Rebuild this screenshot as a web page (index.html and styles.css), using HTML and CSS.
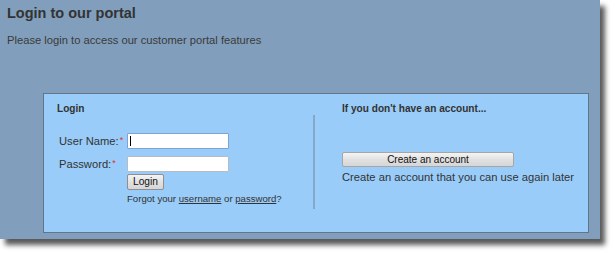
FILE: index.html
```html
<!DOCTYPE html>
<html>
<head>
<meta charset="utf-8">
<link rel="stylesheet" href="styles.css">
</head>
<body>
<div class="panel">
  <h1 class="title">Login to our portal</h1>
  <p class="subtitle">Please login to access our customer portal features</p>
  <div class="box">
    <div class="col-left">
      <div class="heading">Login</div>
      <div class="form">
        <label class="label">User Name:<span class="req">*</span></label>
        <span class="field-wrap focused"><input class="field" type="text"></span>
        <label class="label">Password:<span class="req">*</span></label>
        <span class="field-wrap"><input class="field" type="password"></span>
        <span></span>
        <div class="actions">
          <button class="btn btn-login">Login</button>
          <div class="forgot">Forgot your <a href="#">username</a> or <a href="#">password</a>?</div>
        </div>
      </div>
    </div>
    <div class="divider"></div>
    <div class="col-right">
      <div class="heading">If you don't have an account...</div>
      <button class="btn btn-create">Create an account</button>
      <div class="desc">Create an account that you can use again later</div>
    </div>
  </div>
</div>
</body>
</html>
```
FILE: styles.css
```css
html, body {
  margin: 0;
  padding: 0;
  background: #ffffff;
}
body {
  font-family: "Liberation Sans", Arial, sans-serif;
  color: #333333;
  min-height: 254px;
}
.panel {
  width: 600px;
  height: 239px;
  box-sizing: border-box;
  background: #819fbc;
  padding: 5px 7px;
  box-shadow: 5px 6px 5px rgba(0, 0, 0, 0.65);
}
.title {
  margin: 0;
  font-size: 14.5px;
  line-height: 17px;
  font-weight: bold;
  color: #333333;
}
.subtitle {
  margin: 12px 0 0 0;
  font-size: 11.2px;
  line-height: 13px;
  color: #3a3a3a;
}
.box {
  margin: 46px 0 0 36px;
  width: 546px;
  height: 140px;
  box-sizing: border-box;
  border: 1px solid #62768a;
  background: #99ccf9;
  display: flex;
}
.heading {
  font-size: 10.1px;
  line-height: 12px;
  font-weight: bold;
  color: #333333;
}
.col-left {
  width: 269px;
  box-sizing: border-box;
  padding: 9px 0 0 13px;
}
.form {
  margin: 18px 0 0 2px;
  display: grid;
  grid-template-columns: 68px auto;
  row-gap: 7px;
}
.label {
  font-size: 11.2px;
  line-height: 16px;
  height: 16px;
  color: #333333;
  white-space: nowrap;
}
.req {
  color: #e0302a;
  font-size: 9px;
  vertical-align: top;
  position: relative;
  top: -1px;
  margin-left: 1px;
}
.field-wrap {
  position: relative;
  display: block;
  width: 102px;
  height: 16px;
}
.field {
  display: block;
  box-sizing: border-box;
  width: 102px;
  height: 16px;
  margin: 0;
  padding: 0;
  border: 1px solid #b5bcc6;
  border-radius: 1px;
  background: #ffffff;
  outline: none;
}
.focused .field {
  border-color: #7fa3d6;
}
.focused::after {
  content: "";
  position: absolute;
  left: 3px;
  top: 3px;
  width: 1px;
  height: 10px;
  background: #000000;
}
.actions {
  margin-top: -5px;
  display: flex;
  flex-direction: column;
  align-items: flex-start;
}
.btn {
  font-family: "Liberation Sans", Arial, sans-serif;
  color: #111111;
  box-sizing: border-box;
  margin: 0;
  padding: 0;
  background: linear-gradient(#f4f4f4, #e1e1e1 50%, #d6d6d6);
  border: 1px solid #8f8f8f;
  border-radius: 2px;
  cursor: default;
}
.btn-login {
  width: 37px;
  height: 16px;
  font-size: 10.2px;
  line-height: 14px;
}
.forgot {
  margin-top: 3px;
  font-size: 9.6px;
  line-height: 11px;
  color: #333333;
  white-space: nowrap;
}
.forgot a {
  color: #333333;
  text-decoration: underline;
}
.divider {
  width: 2px;
  height: 94px;
  margin-top: 21px;
  background: #86a8c8;
}
.col-right {
  flex: 1;
  padding: 9px 0 0 27px;
  display: flex;
  flex-direction: column;
  align-items: flex-start;
}
.btn-create {
  margin-top: 37px;
  width: 172px;
  height: 15px;
  font-size: 10px;
  line-height: 13px;
  border-color: #a6a6a6;
}
.desc {
  margin-top: 4px;
  font-size: 11.2px;
  line-height: 13px;
  color: #333333;
  white-space: nowrap;
}
```
